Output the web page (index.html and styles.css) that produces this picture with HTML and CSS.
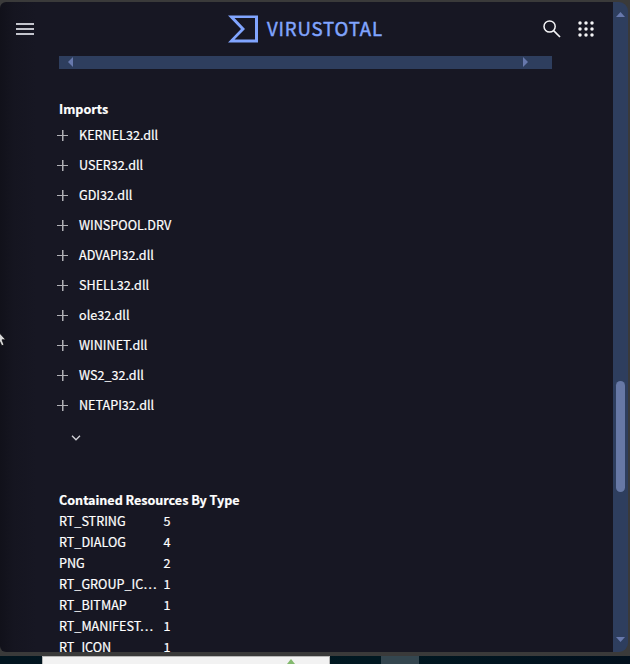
FILE: index.html
```html
<!DOCTYPE html>
<html lang="en">
<head>
<meta charset="utf-8">
<title>VirusTotal</title>
<link rel="stylesheet" href="styles.css">
</head>
<body>
<div class="window">
  <main class="page">
    <header class="topbar">
      <svg class="menu" width="18" height="12" viewBox="0 0 18 12"><path d="M0 1h18M0 6h18M0 11h18" stroke="#c3c4cc" stroke-width="2"/></svg>
      <div class="brand">
        <svg width="30" height="28" viewBox="0 0 30 28"><path fill="#81a5ff" fill-rule="evenodd" d="M0 .5H30V27.500H0L13 14ZM6.500 3L17 14 6.500 24.500H27V3Z"/></svg>
        <span class="brand-name">VIRUSTOTAL</span>
      </div>
      <div class="actions">
        <svg width="18" height="18" viewBox="0 0 18 18" fill="none" stroke="#f4f4f6"><circle cx="6.600" cy="6.500" r="5.600" stroke-width="1.500"/><path d="M10.600 10.700L17 17" stroke-width="1.700"/></svg>
        <svg width="16" height="16" viewBox="0 0 16 16" fill="#f4f4f6"><circle cx="2" cy="2" r="1.750"/><circle cx="8" cy="2" r="1.750"/><circle cx="14" cy="2" r="1.750"/><circle cx="2" cy="8" r="1.750"/><circle cx="8" cy="8" r="1.750"/><circle cx="14" cy="8" r="1.750"/><circle cx="2" cy="14" r="1.750"/><circle cx="8" cy="14" r="1.750"/><circle cx="14" cy="14" r="1.750"/></svg>
      </div>
    </header>
    <div class="hscroll">
      <svg width="5" height="10" viewBox="0 0 5 10"><path d="M5 0v10L0 5z" fill="#6778ac"/></svg>
      <svg width="5" height="10" viewBox="0 0 5 10"><path d="M0 0v10L5 5z" fill="#6778ac"/></svg>
    </div>
    <section class="imports">
      <h2>Imports</h2>
      <ul>
        <li><i class="plus"></i><span>KERNEL32.dll</span></li>
        <li><i class="plus"></i><span>USER32.dll</span></li>
        <li><i class="plus"></i><span>GDI32.dll</span></li>
        <li><i class="plus"></i><span>WINSPOOL.DRV</span></li>
        <li><i class="plus"></i><span>ADVAPI32.dll</span></li>
        <li><i class="plus"></i><span>SHELL32.dll</span></li>
        <li><i class="plus"></i><span>ole32.dll</span></li>
        <li><i class="plus"></i><span>WININET.dll</span></li>
        <li><i class="plus"></i><span>WS2_32.dll</span></li>
        <li><i class="plus"></i><span>NETAPI32.dll</span></li>
      </ul>
      <svg class="more" width="10" height="6" viewBox="0 0 10 6"><path d="M1 .8L5 4.800 9 .8" fill="none" stroke="#d4d4d9" stroke-width="1.300"/></svg>
    </section>
    <section class="resources">
      <h2>Contained Resources By Type</h2>
      <dl>
        <dt>RT_STRING</dt><dd>5</dd>
        <dt>RT_DIALOG</dt><dd>4</dd>
        <dt>PNG</dt><dd>2</dd>
        <dt>RT_GROUP_IC…</dt><dd>1</dd>
        <dt>RT_BITMAP</dt><dd>1</dd>
        <dt>RT_MANIFEST…</dt><dd>1</dd>
        <dt>RT_ICON</dt><dd>1</dd>
      </dl>
    </section>
  </main>
  <div class="vscroll">
    <svg width="9" height="5" viewBox="0 0 9 5"><path d="M0 5h9L4.500 0z" fill="#6778ac"/></svg>
    <div class="thumb"></div>
    <svg class="down" width="9" height="5" viewBox="0 0 9 5"><path d="M0 0h9L4.500 5z" fill="#6778ac"/></svg>
  </div>
</div>
<div class="desktop">
  <div class="panel"><svg width="8" height="5" viewBox="0 0 8 5"><path d="M4 0L8 5H0z" fill="#83b96e"/></svg></div>
  <div class="task"></div>
</div>
<svg class="cursor" width="7" height="16" viewBox="0 0 7 16"><path d="M-6-5L5.800 7.800H2L4 13 1.800 13.800-1 8z" fill="#d7d7d7" stroke="#08080c" stroke-width=".8"/></svg>
</body>
</html>
```
FILE: styles.css
```css
* { box-sizing: border-box; }
body {
  margin: 0;
  height: 664px;
  padding-top: 2px;
  overflow: hidden;
  background: #3a3a3a;
  color: #fff;
  font: 12.6px/20px "Noto Sans CJK JP", "Noto Sans", sans-serif;
  -webkit-text-stroke: .2px currentColor;
}
.window {
  display: flex;
  width: 628px;
  height: 650px;
  overflow: hidden;
  border-radius: 6px 9px 9px 6px;
}
.page {
  width: 613px;
  overflow: hidden;
  background: linear-gradient(90deg, #11111a 0, #151520 14px, #171723 36px);
}
.topbar {
  display: grid;
  grid-template-columns: 212px 1fr auto;
  align-items: center;
  height: 54px;
  padding: 0 19px 0 16px;
}
.brand { display: flex; align-items: center; gap: 9px; }
.brand-name {
  position: relative;
  top: -1px;
  color: #81a5ff;
  font-size: 18.6px;
  line-height: 28px;
  letter-spacing: .85px;
  white-space: nowrap;
  -webkit-text-stroke-width: .45px;
}
.actions { display: flex; align-items: center; gap: 17px; }
.hscroll {
  display: flex;
  justify-content: space-between;
  width: 493px;
  height: 13px;
  margin-left: 59px;
  padding: 1px 24px 0 9px;
  background: #2e3e5e;
}
h2 { margin: 0; font-size: 12.6px; line-height: 20px; font-weight: 700; }
.imports { height: 421px; padding: 30px 0 0 59px; }
.imports ul { margin: 1px 0 0; padding: 0; list-style: none; }
.imports li { display: flex; align-items: center; height: 30px; margin-left: -2px; }
.plus {
  width: 11px;
  height: 11px;
  margin-right: 11px;
  background:
    linear-gradient(#b0b0b5, #b0b0b5) 5px 0 / 1.5px 11px no-repeat,
    linear-gradient(#b0b0b5, #b0b0b5) 0 5px / 11px 1px no-repeat;
}
.more { display: block; margin: 15px 0 0 12px; }
.resources { padding-left: 59px; }
.resources h2 { letter-spacing: -.03px; }
.resources dl {
  display: grid;
  grid-template-columns: 104.4px 20px;
  grid-auto-rows: 21px;
  margin: 0;
}
.resources dt, .resources dd { margin: 0; line-height: 21px; white-space: nowrap; }
.vscroll {
  display: flex;
  flex-direction: column;
  align-items: center;
  width: 15px;
  padding: 10px 0;
  background: #2e3e5e;
}
.thumb {
  width: 9px;
  height: 111px;
  margin-top: 364px;
  border-radius: 5px;
  background: #6778a5;
}
.down { margin-top: auto; }
.desktop {
  display: flex;
  height: 8px;
  margin-top: 4px;
  padding-left: 42px;
  background: linear-gradient(90deg, #02151f, #001821 60%, #02101d);
}
.panel {
  width: 288px;
  padding: 2px 0 0 244px;
  border: solid #b8b8b8;
  border-width: 1px 1px 0;
  background: #f2f2f2;
}
.panel svg { display: block; }
.task { width: 38px; margin-left: 51px; background: #34464f; }
.cursor { position: absolute; left: 0; top: 332px; }
```
